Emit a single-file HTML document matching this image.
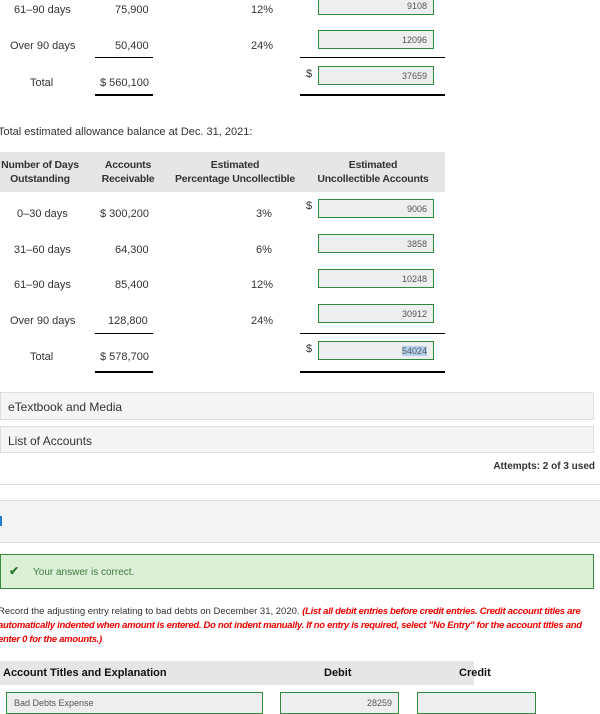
<!DOCTYPE html>
<html><head><style>
body{margin:0;width:600px;height:712px;overflow:hidden;background:#fff;font-family:"Liberation Sans",sans-serif;font-size:11px;color:#333;position:relative}
.a{position:absolute}
.in{position:absolute;left:318px;width:116px;height:19px;border:1px solid #2e8b3e;background:#eee;font-size:9px;color:#555;text-align:right;box-sizing:border-box;padding:4px 6px 0 0}
.ln{position:absolute;height:2px;background:#000}
.c{text-align:center}
.h{font-weight:bold;line-height:14px;white-space:nowrap;font-size:10.5px;letter-spacing:-0.2px}
.box{position:absolute;left:0;width:594px;background:#f5f5f5;border:1px solid #ddd;box-sizing:border-box}
</style></head><body>
<div class="a" style="left:14px;top:4px">61–90 days</div>
<div class="a" style="left:115px;top:4px">75,900</div>
<div class="a" style="left:251px;top:4px">12%</div>
<div class="in" style="top:-4px">9108</div>
<div class="a" style="left:10px;top:40px">Over 90 days</div>
<div class="a" style="left:115px;top:40px">50,400</div>
<div class="a" style="left:251px;top:40px">24%</div>
<div class="in" style="top:30px">12096</div>
<div class="ln" style="left:95px;top:57px;width:58px;height:1px"></div>
<div class="ln" style="left:300px;top:57px;width:145px;height:1px"></div>
<div class="a" style="left:30px;top:77px">Total</div>
<div class="a" style="left:100px;top:77px">$ 560,100</div>
<div class="a" style="left:306px;top:68px">$</div>
<div class="in" style="top:66px">37659</div>
<div class="ln" style="left:95px;top:94px;width:58px"></div>
<div class="ln" style="left:300px;top:94px;width:145px"></div>
<div class="a" style="left:-2px;top:126px">Total estimated allowance balance at Dec. 31, 2021:</div>
<div class="a" style="left:0;top:152px;width:445px;height:40px;background:#e6e6e6"></div>
<div class="a c h" style="left:0;top:158px;width:80px">Number of Days<br>Outstanding</div>
<div class="a c h" style="left:98px;top:158px;width:60px">Accounts<br>Receivable</div>
<div class="a c h" style="left:170px;top:158px;width:130px">Estimated<br>Percentage Uncollectible</div>
<div class="a c h" style="left:312px;top:158px;width:122px">Estimated<br>Uncollectible Accounts</div>
<div class="a" style="left:17px;top:208px">0–30 days</div>
<div class="a" style="left:100px;top:208px">$ 300,200</div>
<div class="a" style="left:256px;top:208px">3%</div>
<div class="a" style="left:306px;top:200px">$</div>
<div class="in" style="top:199px">9006</div>
<div class="a" style="left:14px;top:244px">31–60 days</div>
<div class="a" style="left:115px;top:244px">64,300</div>
<div class="a" style="left:256px;top:244px">6%</div>
<div class="in" style="top:234px">3858</div>
<div class="a" style="left:14px;top:279px">61–90 days</div>
<div class="a" style="left:115px;top:279px">85,400</div>
<div class="a" style="left:251px;top:279px">12%</div>
<div class="in" style="top:269px">10248</div>
<div class="a" style="left:10px;top:315px">Over 90 days</div>
<div class="a" style="left:108px;top:315px">128,800</div>
<div class="a" style="left:251px;top:315px">24%</div>
<div class="in" style="top:304px">30912</div>
<div class="ln" style="left:95px;top:333px;width:58px;height:1px"></div>
<div class="ln" style="left:300px;top:333px;width:145px;height:1px"></div>
<div class="a" style="left:30px;top:351px">Total</div>
<div class="a" style="left:100px;top:351px">$ 578,700</div>
<div class="a" style="left:306px;top:343px">$</div>
<div class="in" style="top:341px"><span style="background:#b4d2f0">54024</span></div>
<div class="ln" style="left:95px;top:371px;width:58px"></div>
<div class="ln" style="left:300px;top:371px;width:145px"></div>
<div class="box" style="top:392px;height:28px;padding:7px 0 0 7px;font-size:12px">eTextbook and Media</div>
<div class="box" style="top:426px;height:27px;padding:7px 0 0 7px;font-size:12px">List of Accounts</div>
<div class="a" style="right:5px;top:461px;font-weight:bold;font-size:10px">Attempts: 2 of 3 used</div>
<div class="a" style="left:0;top:484px;width:600px;height:1px;background:#ddd"></div>
<div class="a" style="left:0;top:500px;width:600px;height:43px;background:#f4f4f4;border-top:1px solid #ddd;border-bottom:1px solid #ddd;box-sizing:border-box"></div>
<div class="a" style="left:0;top:516px;width:2px;height:10px;background:#1a7fd4"></div>
<div class="a" style="left:0;top:554px;width:594px;height:35px;background:#dcf0d8;border:1px solid #3a8a3e;box-sizing:border-box"></div>
<div class="a" style="left:9px;top:564px;color:#2e7d32;font-size:12px;font-weight:bold">✔</div>
<div class="a" style="left:33px;top:567px;color:#3d7a3d;font-size:10px">Your answer is correct.</div>
<div class="a" style="left:-2px;top:605px;width:600px;font-size:9.5px;line-height:14px">Record the adjusting entry relating to bad debts on December 31, 2020. <i style="color:#e00;font-weight:bold;letter-spacing:-0.3px">(List all debit entries before credit entries. Credit account titles are automatically indented when amount is entered. Do not indent manually. If no entry is required, select "No Entry" for the account titles and enter 0 for the amounts.)</i></div>
<div class="a" style="left:0;top:661px;width:474px;height:24px;background:#e6e6e6"></div>
<div class="a" style="left:3px;top:667px;font-weight:bold;font-size:11px;color:#111">Account Titles and Explanation</div>
<div class="a" style="left:324px;top:667px;font-weight:bold;color:#111">Debit</div>
<div class="a" style="left:459px;top:667px;font-weight:bold;color:#111">Credit</div>
<div class="in" style="left:6px;top:692px;width:257px;height:22px;text-align:left;padding:5px 0 0 7px">Bad Debts Expense</div>
<div class="in" style="left:280px;top:692px;width:119px;height:22px;padding-top:5px">28259</div>
<div class="in" style="left:417px;top:692px;width:119px;height:22px"></div>
</body></html>
